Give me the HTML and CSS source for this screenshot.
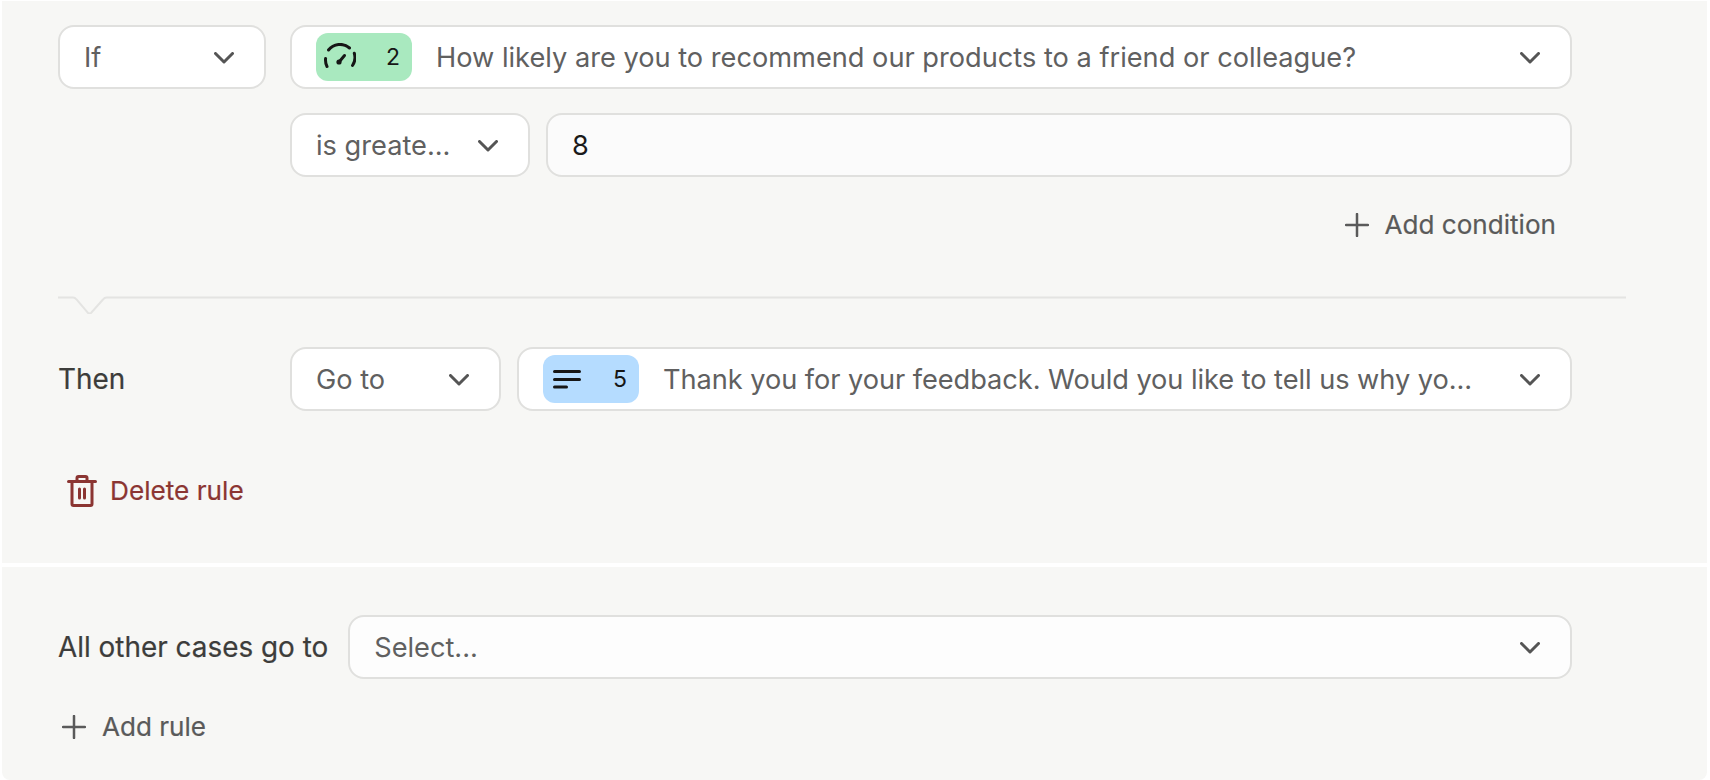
FILE: index.html
```html
<!DOCTYPE html>
<html lang="en">
<head>
<meta charset="utf-8">
<title>Logic rules</title>
<link rel="stylesheet" href="styles.css">
</head>
<body>
<main class="page">
  <section class="panel panel-rule">
    <div class="rule-row">
      <div class="select select-if"><span class="select-text">If</span><svg class="chevron" viewBox="0 0 20 12"><path d="M1.500 1.500 10 10l8.500-8.500"/></svg></div>
      <div class="select select-grow">
        <span class="pill pill-green">
          <svg class="pill-icon" viewBox="0 0 32 25"><path d="M1.600 15.500A14.500 14.500 0 0 0 3 23.500M4.500 7A14.500 14.500 0 0 1 25.500 5M30.300 10.300A14.500 14.500 0 0 1 28.500 22.500"/><path d="M15.500 18.500l5-6"/><circle cx="15" cy="19" r="2.600" class="fill"/></svg>
          <span>2</span>
        </span>
        <span class="select-text select-fill">How likely are you to recommend our products to a friend or colleague?</span>
        <svg class="chevron" viewBox="0 0 20 12"><path d="M1.500 1.500 10 10l8.500-8.500"/></svg>
      </div>
    </div>
    <div class="rule-row rule-row-sub">
      <div class="select select-op"><span class="select-text">is greate...</span><svg class="chevron" viewBox="0 0 20 12"><path d="M1.500 1.500 10 10l8.500-8.500"/></svg></div>
      <div class="value-input">8</div>
    </div>
    <div class="add-condition-row">
      <div class="action">
        <svg class="plus" viewBox="0 0 24 24"><path d="M12 1v22M1 12h22"/></svg>
        <span>Add condition</span>
      </div>
    </div>
    <svg class="divider" viewBox="0 0 1568 18" preserveAspectRatio="none"><path d="M0 1.500H15q2 0 3.500 2L30 17q2 .8 3 0L45 3.500q1.500-2 3.500-2H1568"/></svg>
    <div class="then-row">
      <span class="row-label then-label">Then</span>
      <div class="select select-goto"><span class="select-text">Go to</span><svg class="chevron" viewBox="0 0 20 12"><path d="M1.500 1.500 10 10l8.500-8.500"/></svg></div>
      <div class="select select-grow select-target">
        <span class="pill pill-blue">
          <svg class="pill-icon-lines" viewBox="0 0 28 20"><path d="M1.500 2.500h25M1.500 10.500h25M1.500 18h12"/></svg>
          <span>5</span>
        </span>
        <span class="select-text select-fill target-text">Thank you for your feedback. Would you like to tell us why yo...</span>
        <svg class="chevron" viewBox="0 0 20 12"><path d="M1.500 1.500 10 10l8.500-8.500"/></svg>
      </div>
    </div>
    <div class="delete-rule">
      <svg class="trash" viewBox="0 0 30 32"><path d="M1.500 6.500h27M5 6.500v22.500q0 1.500 1.500 1.500h17q1.500 0 1.500-1.500V6.500M10 6.500V3q0-1.500 1.500-1.500h7Q20 1.500 20 3v3.500M12.500 14v9M17.500 14v9"/></svg>
      <span>Delete rule</span>
    </div>
  </section>
  <section class="panel panel-other">
    <div class="other-row">
      <span class="row-label">All other cases go to</span>
      <div class="select select-grow select-other"><span class="select-text select-fill">Select...</span><svg class="chevron" viewBox="0 0 20 12"><path d="M1.500 1.500 10 10l8.500-8.500"/></svg></div>
    </div>
    <div class="action add-rule">
      <svg class="plus" viewBox="0 0 24 24"><path d="M12 1v22M1 12h22"/></svg>
      <span>Add rule</span>
    </div>
  </section>
</main>
</body>
</html>
```
FILE: styles.css
```css
* { box-sizing: border-box; }
html, body { margin: 0; padding: 0; background: #fff; }
body {
  width: 1710px;
  height: 780px;
  overflow: hidden;
  font-family: Inter, "Noto Sans", sans-serif;
  font-size: 27.2px;
  color: #606060;
}
.page {
  display: flex;
  flex-direction: column;
  gap: 4px;
  padding: 1px 3px 0 2px;
  height: 780px;
}
.panel { background: #f7f7f5; padding-left: 56px; }
.panel-rule { height: 562px; padding-top: 24px; }
.panel-other { flex: 1; padding-top: 48px; border-bottom-left-radius: 8px; border-bottom-right-radius: 8px; }

.rule-row { display: flex; gap: 24px; width: 1514px; }
.rule-row-sub { padding-left: 232px; gap: 16px; margin-top: 24px; }

.select {
  display: flex;
  align-items: center;
  height: 64px;
  padding: 0 26px 0 24px;
  background: #fff;
  border: 2px solid #e0e0de;
  border-radius: 16px;
  flex-shrink: 0;
  white-space: nowrap;
}
.select-if { width: 208px; justify-content: space-between; }
.select-op { width: 240px; justify-content: space-between; }
.select-goto { width: 211px; justify-content: space-between; }
.select-grow { flex: 1; min-width: 0; }
.select-text { line-height: 1; margin-top: 2px; }
.select-fill { flex: 1; }
.target-text { letter-spacing: -0.05px; }
.chevron { width: 20px; height: 12px; flex-shrink: 0; fill: none; stroke: #555; stroke-width: 3; stroke-linecap: round; stroke-linejoin: round; margin: 2px 4px 0 0; }
.value-input {
  flex: 1;
  display: flex;
  align-items: center;
  height: 64px;
  padding: 0 24px;
  background: #fbfbfb;
  border: 2px solid #e0e0de;
  border-radius: 16px;
  color: #1a1a1a;
}

.pill {
  display: flex;
  align-items: center;
  justify-content: space-between;
  width: 96px;
  height: 48px;
  padding: 0 12px 0 8px;
  border-radius: 12px;
  margin-right: 24px;
  flex-shrink: 0;
  color: #161616;
  font-size: 23px;
}
.pill-green { background: #a9e9bf; }
.pill-blue { background: #b5dcff; }
.pill-icon { width: 32px; height: 25px; margin-bottom: 3px; fill: none; stroke: #161616; stroke-width: 3; stroke-linecap: round; }
.pill-icon .fill { fill: #161616; stroke: none; }
.pill-icon-lines { width: 28px; height: 20px; margin-left: 2px; fill: none; stroke: #161616; stroke-width: 3; stroke-linecap: round; }

.action { display: inline-flex; align-items: center; gap: 16px; height: 24px; font-size: 26.1px; color: #5a5a5a; line-height: 24px; -webkit-text-stroke: 0.2px currentColor; }
.plus { width: 24px; height: 24px; flex-shrink: 0; fill: none; stroke: #5a5a5a; stroke-width: 2.500; stroke-linecap: round; }
.add-condition-row { display: flex; justify-content: flex-end; width: 1498px; margin-top: 36px; }

.divider { display: block; width: 1568px; height: 18px; margin-top: 59px; fill: none; stroke: #e4e4e2; stroke-width: 2; }

.then-row { display: flex; align-items: center; width: 1514px; margin-top: 33px; }
.row-label { font-size: 27.9px; color: #3d3d3b; white-space: nowrap; line-height: 1; margin-top: 2px; -webkit-text-stroke: 0.2px currentColor; }
.then-label { width: 232px; flex-shrink: 0; }
.select-target { margin-left: 16px; }

.delete-rule { display: flex; align-items: center; gap: 13px; margin-top: 64px; margin-left: 9px; color: #8b3532; font-size: 26.2px; line-height: 1; -webkit-text-stroke: 0.2px currentColor; }
.trash { width: 30px; height: 32px; flex-shrink: 0; fill: none; stroke: #8b3532; stroke-width: 3; stroke-linecap: round; stroke-linejoin: round; }

.other-row { display: flex; align-items: center; width: 1514px; gap: 20px; }
.select-other { background: #fdfdfd; }
.add-rule { margin-top: 36px; margin-left: 4px; }
```
